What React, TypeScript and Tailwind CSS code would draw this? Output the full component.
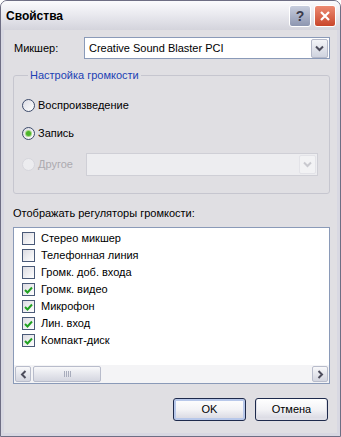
import React from "react";

const font = { fontFamily: '"Liberation Sans", Arial, sans-serif' };

function ChevronDown({ disabled }: { disabled?: boolean }) {
  return (
    <svg width="9" height="7" viewBox="0 0 9 7">
      <path
        d="M1 1.5 L4.5 5 L8 1.5"
        fill="none"
        stroke={disabled ? "#c9c9cf" : "#4d4d5c"}
        strokeWidth="2"
      />
    </svg>
  );
}

function ComboButton({ disabled }: { disabled?: boolean }) {
  return (
    <div
      className={
        disabled
          ? "w-[17px] h-[19px] rounded-[2px] border border-[#e3e3e8] bg-[#f2f2f4] flex items-center justify-center"
          : "w-[17px] h-[19px] rounded-[2px] border border-[#b4b8c8] bg-gradient-to-b from-[#f4f5f8] to-[#cfd3df] flex items-center justify-center"
      }
    >
      <ChevronDown disabled={disabled} />
    </div>
  );
}

function Radio({ checked, disabled }: { checked?: boolean; disabled?: boolean }) {
  return (
    <span
      className={
        disabled
          ? "w-[13px] h-[13px] rounded-full border border-[#d6d6dc] bg-[#ececef] flex items-center justify-center shrink-0"
          : "w-[13px] h-[13px] rounded-full border border-[#3c4a6a] bg-gradient-to-br from-[#dcdce4] to-white flex items-center justify-center shrink-0"
      }
    >
      {checked && <span className="w-[5px] h-[5px] rounded-full bg-[#4cb52c] ring-1 ring-[#a8d888]" />}
    </span>
  );
}

function Check({ checked }: { checked?: boolean }) {
  return (
    <span className="w-[13px] h-[13px] border border-[#4a5a78] bg-gradient-to-br from-[#dcdce2] to-white flex items-center justify-center shrink-0">
      {checked && (
        <svg width="9" height="8" viewBox="0 0 9 8">
          <path d="M1 4 L3.5 6.5 L8 1.5" fill="none" stroke="#21a121" strokeWidth="2" />
        </svg>
      )}
    </span>
  );
}

const items: [string, boolean][] = [
  ["Стерео микшер", false],
  ["Телефонная линия", false],
  ["Громк. доб. входа", false],
  ["Громк. видео", true],
  ["Микрофон", true],
  ["Лин. вход", true],
  ["Компакт-диск", true],
];

function XPButton({ label, isDefault }: { label: string; isDefault?: boolean }) {
  return (
    <button
      className={
        "w-[73px] h-[23px] rounded-[3px] border border-[#1e2a4c] bg-gradient-to-b from-white via-[#f3f3f6] to-[#d6d6e0] text-[11px] text-black flex items-center justify-center " +
        (isDefault ? "shadow-[inset_0_0_0_2px_#b8c8ea]" : "shadow-[inset_0_-1px_0_1px_#e0e0e8]")
      }
    >
      {label}
    </button>
  );
}

export default function App() {
  return (
    <div className="w-[341px] h-[437px] bg-white" style={font}>
      <div className="w-[341px] h-[437px] flex flex-col rounded-t-[7px] border border-[#6e6e84] bg-[#d8d8e2] overflow-hidden">
        {/* Title bar */}
        <div className="h-[29px] shrink-0 flex items-center justify-between pl-[5px] pr-[4px] pt-[1px] bg-gradient-to-b from-[#fbfbfd] via-[#e8e8ee] to-[#d4d4dc]">
          <span className="text-[12px] font-bold text-black">Свойства</span>
          <div className="flex gap-[3px] items-center">
            <div className="w-[22px] h-[22px] rounded-[3px] border border-white bg-gradient-to-b from-[#c8cede] to-[#8d96b0] flex items-center justify-center">
              <span className="text-[14px] font-bold text-[#3a3a4a] leading-none">?</span>
            </div>
            <div className="w-[22px] h-[22px] rounded-[3px] border border-white bg-gradient-to-b from-[#ec8a72] to-[#c8452a] flex items-center justify-center">
              <svg width="12" height="12" viewBox="0 0 12 12">
                <path d="M2 2 L10 10 M10 2 L2 10" stroke="white" strokeWidth="2.2" />
              </svg>
            </div>
          </div>
        </div>

        {/* Client area */}
        <div className="flex-1 mx-[3px] mb-[3px] bg-[#e0dfe3] pl-[9px] pr-[7px] pt-[7px] text-[11px] text-black">
          <div className="flex items-center h-[22px]">
            <span className="w-[71px] pl-[1px]">Микшер:</span>
            <div className="flex-1 h-[22px] border border-[#8a9ab8] bg-white flex items-center justify-between pl-[4px] pr-[1px]">
              <span>Creative Sound Blaster PCI</span>
              <ComboButton />
            </div>
          </div>

          <fieldset className="mt-[9px] border border-[#c6c6cf] rounded-[3px] pl-[8px] pr-[11px] pt-[15px] pb-[17px]">
            <legend className="ml-[6px] px-[2px] text-[#1c3fb4] leading-[14px]">Настройка громкости</legend>
            <div className="flex items-center gap-[3px] h-[16px]">
              <Radio />
              <span>Воспроизведение</span>
            </div>
            <div className="flex items-center gap-[3px] h-[16px] mt-[12px]">
              <Radio checked />
              <span>Запись</span>
            </div>
            <div className="flex items-center h-[23px] mt-[12px]">
              <Radio disabled />
              <span className="ml-[3px] w-[48px] text-[#acaaaf]">Другое</span>
              <div className="flex-1 h-[23px] border border-[#cfcfd6] bg-[#ededf0] flex items-center justify-end pr-[1px]">
                <ComboButton disabled />
              </div>
            </div>
          </fieldset>

          <div className="mt-[12px] leading-[14px]">Отображать регуляторы громкости:</div>

          <div className="mt-[7px] h-[157px] border border-[#8a9ab8] bg-white flex flex-col">
            <div className="flex-1 pt-[2px] pl-[8px]">
              {items.map(([label, on]) => (
                <div key={label} className="h-[17px] flex items-center gap-[6px]">
                  <Check checked={on} />
                  <span>{label}</span>
                </div>
              ))}
            </div>
            {/* horizontal scrollbar */}
            <div className="h-[18px] bg-[#f4f4f6] flex items-center px-[1px] gap-[2px]">
              <div className="w-[16px] h-[16px] rounded-[2px] border border-[#b8bccb] bg-gradient-to-b from-[#f8f8fa] to-[#d4d6e0] flex items-center justify-center">
                <svg width="7" height="9" viewBox="0 0 7 9">
                  <path d="M5.5 1 L2 4.5 L5.5 8" fill="none" stroke="#4d4d5c" strokeWidth="2" />
                </svg>
              </div>
              <div className="w-[68px] h-[16px] rounded-[2px] border border-[#b8bccb] bg-gradient-to-b from-[#f8f8fa] to-[#d4d6e0] flex items-center justify-center gap-[1px]">
                <span className="w-px h-[6px] bg-[#a8acbc]" />
                <span className="w-px h-[6px] bg-[#a8acbc]" />
                <span className="w-px h-[6px] bg-[#a8acbc]" />
                <span className="w-px h-[6px] bg-[#a8acbc]" />
              </div>
              <div className="flex-1" />
              <div className="w-[16px] h-[16px] rounded-[2px] border border-[#b8bccb] bg-gradient-to-b from-[#f8f8fa] to-[#d4d6e0] flex items-center justify-center">
                <svg width="7" height="9" viewBox="0 0 7 9">
                  <path d="M1.5 1 L5 4.5 L1.5 8" fill="none" stroke="#4d4d5c" strokeWidth="2" />
                </svg>
              </div>
            </div>
          </div>

          <div className="mt-[14px] flex justify-end gap-[9px] pr-[2px]">
            <XPButton label="OK" isDefault />
            <XPButton label="Отмена" />
          </div>
        </div>
      </div>
    </div>
  );
}
